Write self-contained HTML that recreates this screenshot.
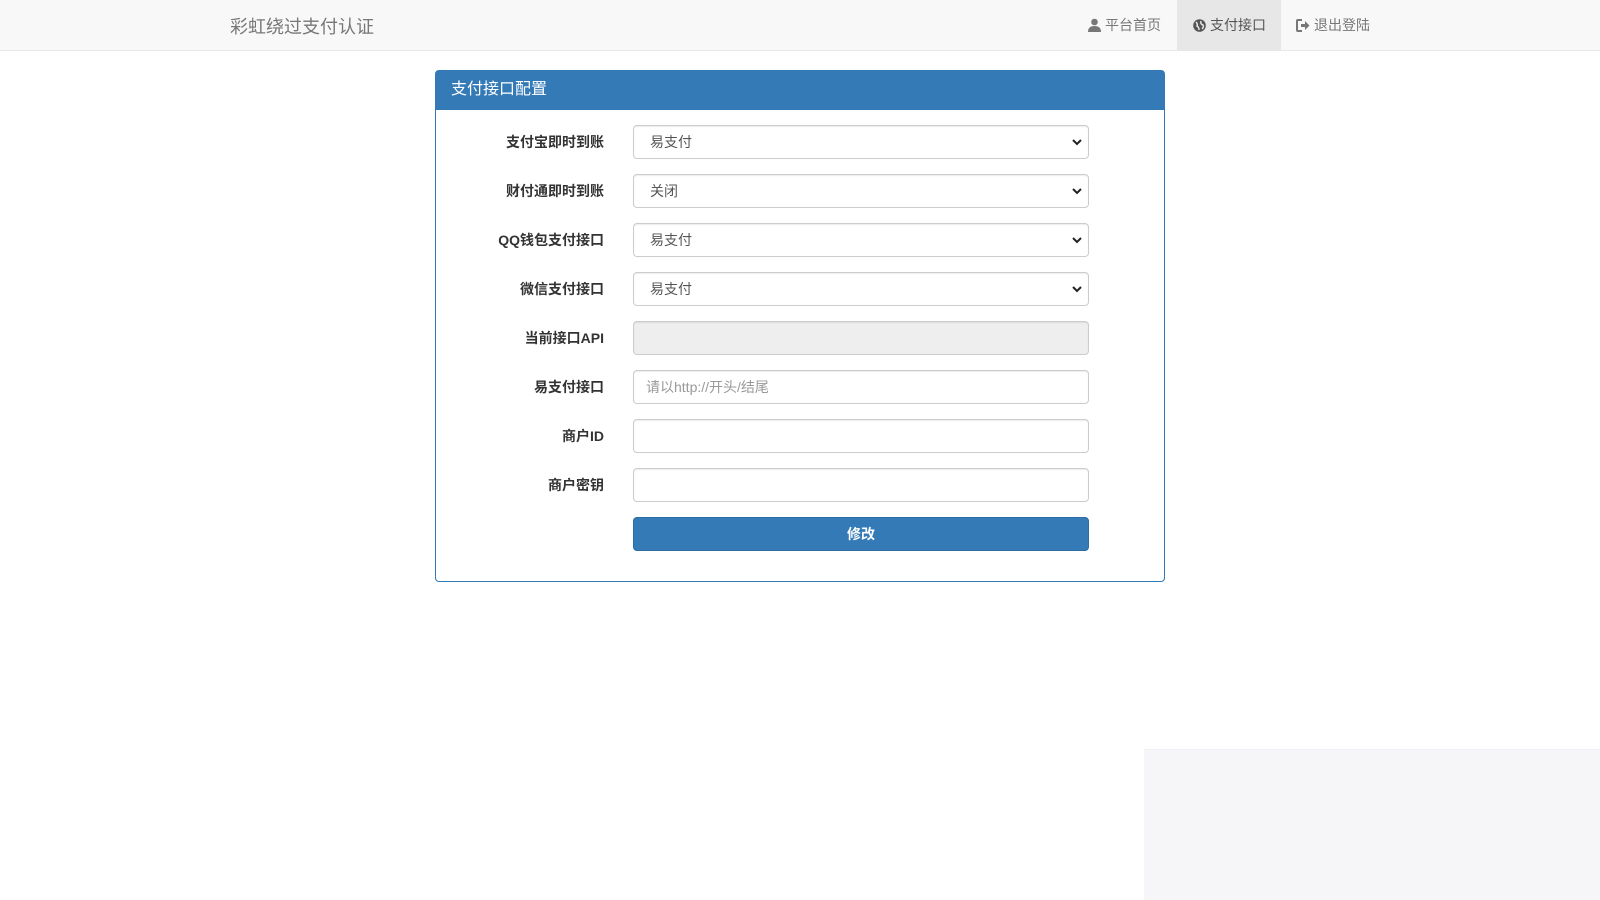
<!DOCTYPE html>
<html><head><meta charset="utf-8"><style>
*{box-sizing:border-box;margin:0;padding:0}
body{width:1600px;height:900px;background:#fff;font-family:"Liberation Sans","Noto Sans CJK SC",sans-serif;font-size:14px;color:#333;position:relative;overflow:hidden}
.nav{position:absolute;left:0;top:0;width:1600px;height:51px;background:#f8f8f8;border-bottom:1px solid #e7e7e7}
.brand{position:absolute;left:230px;top:13px;font-size:18px;color:#777}
.ni{position:absolute;top:0;height:50px;line-height:50px;color:#777;font-size:14px}
.ni svg{vertical-align:-2px;margin-right:4px}
.panel{position:absolute;left:435px;top:70px;width:730px;height:512px;border:1px solid #337ab7;border-radius:4px}
.ph{background:#337ab7;color:#fff;height:39px;line-height:38px;padding-left:15px;font-size:16px}
.row{position:absolute;left:0;width:730px;height:34px}
.row .lbl{position:absolute;left:0;width:168px;line-height:34px;text-align:right;font-weight:bold}
.ctl{position:absolute;left:197px;width:456px;height:34px;border:1px solid #ccc;border-radius:4px;background:#fff;line-height:32px;padding-left:16px;color:#555;box-shadow:inset 0 1px 1px rgba(0,0,0,.075)}
.ctl.dis{background:#eee}
.ctl.ph2{color:#999;padding-left:12px}
.arr{position:absolute;right:6px;top:12px}
.btn{position:absolute;left:197px;width:456px;height:34px;background:#337ab7;border:1px solid #2e6da4;border-radius:4px;color:#fff;text-align:center;line-height:32px;font-weight:bold}
.grey{position:absolute;left:1144px;top:749px;width:456px;height:151px;background:#f6f6f8;border-top:1px solid #eef0f4}
</style></head><body>
<div class="nav">
<div class="brand">彩虹绕过支付认证</div>
<div class="ni" style="left:1088px"><svg width="13" height="14" viewBox="0 0 13 14"><circle cx="6.5" cy="4" r="3.3" fill="#777"/><path d="M0 14 Q0 8 6.5 8 Q13 8 13 14Z" fill="#777"/></svg>平台首页</div>
<div class="ni" style="left:1177px;width:104px;background:#e7e7e7;padding-left:16px;color:#555"><svg width="13" height="13" viewBox="0 0 13 13"><circle cx="6.5" cy="6.5" r="6.3" fill="#555"/><path d="M3 3 Q5 5 4 7 Q6 8 6 11 M8 2 Q7 5 10 6 Q11 8 9 10" stroke="#e7e7e7" stroke-width="1.5" fill="none"/></svg>支付接口</div>
<div class="ni" style="left:1296px"><svg width="14" height="13" viewBox="0 0 14 13"><path d="M6 1H2Q1 1 1 2V11Q1 12 2 12H6" stroke="#777" stroke-width="2" fill="none"/><path d="M5 5H9V2L13.5 6.5 9 11V8H5Z" fill="#777"/></svg>退出登陆</div>
</div>
<div class="panel">
<div class="ph">支付接口配置</div>
<div class="row" style="top:54px"><div class="lbl">支付宝即时到账</div><div class="ctl">易支付<svg class="arr" width="10" height="8" viewBox="0 0 10 8"><path d="M1 2L5 6 9 2" stroke="#222" stroke-width="2" fill="none"/></svg></div></div>
<div class="row" style="top:103px"><div class="lbl">财付通即时到账</div><div class="ctl">关闭<svg class="arr" width="10" height="8" viewBox="0 0 10 8"><path d="M1 2L5 6 9 2" stroke="#222" stroke-width="2" fill="none"/></svg></div></div>
<div class="row" style="top:152px"><div class="lbl">QQ钱包支付接口</div><div class="ctl">易支付<svg class="arr" width="10" height="8" viewBox="0 0 10 8"><path d="M1 2L5 6 9 2" stroke="#222" stroke-width="2" fill="none"/></svg></div></div>
<div class="row" style="top:201px"><div class="lbl">微信支付接口</div><div class="ctl">易支付<svg class="arr" width="10" height="8" viewBox="0 0 10 8"><path d="M1 2L5 6 9 2" stroke="#222" stroke-width="2" fill="none"/></svg></div></div>
<div class="row" style="top:250px"><div class="lbl">当前接口API</div><div class="ctl dis"></div></div>
<div class="row" style="top:299px"><div class="lbl">易支付接口</div><div class="ctl ph2">请以http://开头/结尾</div></div>
<div class="row" style="top:348px"><div class="lbl">商户ID</div><div class="ctl"></div></div>
<div class="row" style="top:397px"><div class="lbl">商户密钥</div><div class="ctl"></div></div>
<div class="row" style="top:446px"><div class="btn">修改</div></div>
</div>
<div class="grey"></div>
</body></html>
